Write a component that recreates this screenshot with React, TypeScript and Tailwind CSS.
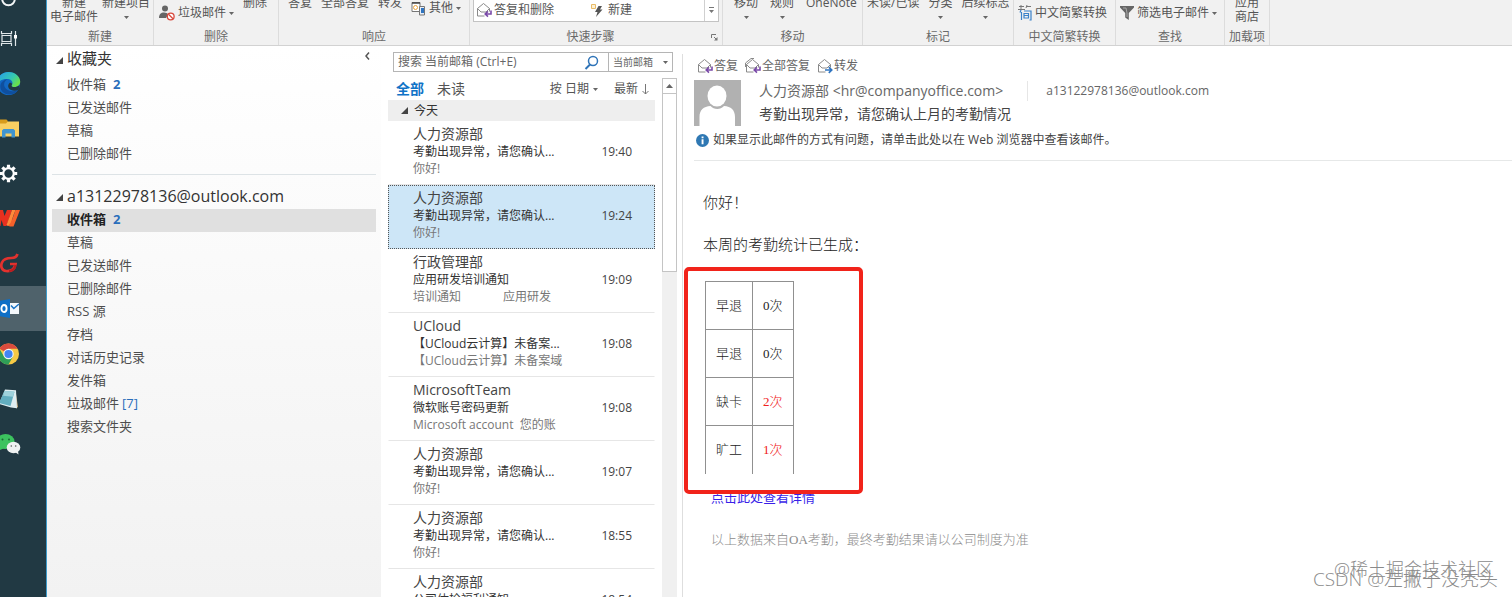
import React from "react";

const LINK_BLUE = "text-[#2a6ebb]";

function Caret({ className = "" }: { className?: string }) {
  return (
    <svg width="5" height="3" viewBox="0 0 5 3" className={`shrink-0 ${className}`} aria-hidden="true">
      <path d="M0 0h5L2.5 3z" fill="#666" />
    </svg>
  );
}

function Corner({ className = "" }: { className?: string }) {
  return (
    <svg width="7" height="7" viewBox="0 0 7 7" className={`shrink-0 ${className}`} aria-hidden="true">
      <path d="M7 0v7H0z" fill="#444" />
    </svg>
  );
}

function Envelope({ arrow, all = false }: { arrow: "reply" | "forward"; all?: boolean }) {
  return (
    <svg width="16" height="16" viewBox="0 0 16 16" fill="none" className="shrink-0" aria-hidden="true">
      <path d="M1.5 6.5 7.5 1.5l6 5v3M1.5 6.5v7.5h7M1.5 6.5l3.5 3.5h5l3.500-3.500" stroke="#8a8a8a" strokeWidth="1" />
      {all && <path d="M.5 9V5L6 .5h3" stroke="#8a8a8a" strokeWidth="1" />}
      {arrow === "reply" ? (
        <path d="M15 8.5v3.5H9.500M12 9.300 9.200 12 12 14.700" stroke="#7a4aa8" strokeWidth="1.600" />
      ) : (
        <path d="M8 12h6.500M11.800 9.200 14.700 12l-2.900 2.800" stroke="#2f74c0" strokeWidth="1.700" />
      )}
    </svg>
  );
}

/* ---------- Windows task bar ---------- */

function TaskIcon({ children }: { children: React.ReactNode }) {
  return (
    <svg width="24" height="26" viewBox="0 0 24 26" fill="none" aria-hidden="true">
      {children}
    </svg>
  );
}

const tasks: { name: string; active?: boolean; icon: React.ReactNode }[] = [
  {
    name: "任务视图",
    icon: (
      <TaskIcon>
        <path d="M1.500 5v2.500h10V5M1.500 20v-2.500h10V20M2 8.500v8M11 8.500v8M1.500 9.500h10M1.500 15.500h10M15.500 5v15" stroke="#dfe6e9" strokeWidth="1.200" />
        <rect x="14" y="9" width="3" height="3.500" fill="#fff" />
      </TaskIcon>
    ),
  },
  {
    name: "Edge",
    icon: (
      <TaskIcon>
        <defs>
          <linearGradient id="edgeTop" x1="0" y1="0" x2="1" y2="0.600">
            <stop offset="0.200" stopColor="#2aa8dc" />
            <stop offset="0.650" stopColor="#35c9b0" />
            <stop offset="1" stopColor="#6adf4a" />
          </linearGradient>
        </defs>
        <circle cx="8.500" cy="12.500" r="11.500" fill="#1268c4" />
        <path d="M-3 10.500C-2 4.500 3 1 8.500 1c7 0 11.700 5 11.700 9.500 0 4-3 5.500-6 5.500-3.200 0-3-1.500-2-2.700 1-2-.5-5-4-5.300C4 7.500 0 8.500-3 13.500z" fill="url(#edgeTop)" />
        <path d="M8.200 8c-3.500 1-5 5-3.500 8 2 4 8 5.500 13.500 3-4 5.500-12 6-16 1.500-4-5-1.500-11.500 6-12.500z" fill="#0f4f9e" />
        <path d="M12.200 13.300c-1 1.200-1.200 2.700 2 2.700 2.200 0 4-.6 5.200-2 .3 2-.4 3.700-1.200 5-3.500 1.500-7.500.5-9.200-1.500-1.500-1.800-1-4 .5-5.500.7-.6 2.500-.2 2.700 1.300z" fill="#213943" />
      </TaskIcon>
    ),
  },
  {
    name: "文件资源管理器",
    icon: (
      <TaskIcon>
        <path d="M-2 4.500h8l1.500 1H19v15H-2z" fill="#f8cf62" />
        <path d="M-2 3.500h8.500L8 5.300 6 7.500h-8z" fill="#d79c1c" />
        <path d="M2 21.500v-7L3.500 13h10l1.500 1.500v7h-3.500v-4h-6v4z" fill="#3f94cf" />
      </TaskIcon>
    ),
  },
  {
    name: "设置",
    icon: (
      <TaskIcon>
        <circle cx="8.500" cy="12.500" r="5.300" stroke="#fff" strokeWidth="2.200" />
        <path d="M8.500 3.800v3M8.500 18.200v3M-.2 12.500h3M14.200 12.500h3M2.350 6.350l2.100 2.100M12.550 16.550l2.100 2.100M2.350 18.650l2.100-2.100M12.550 8.450l2.100-2.100" stroke="#fff" strokeWidth="3.200" />
      </TaskIcon>
    ),
  },
  {
    name: "WPS",
    icon: (
      <TaskIcon>
        <path d="M-2 4h5l1.500 6L7 4h5L6.500 20H3.500L1.500 14 .5 20H-2z" fill="#e8301f" />
        <path d="m13 7-5.500 12.500 2.500 1h3.500L20 4h-4.500l-3.500 10z" fill="#f4612a" />
        <path d="M12 4h3.500l-5 13-2.500 3-1.500-1z" fill="#ff8a3a" />
      </TaskIcon>
    ),
  },
  {
    name: "Foxmail",
    icon: (
      <TaskIcon>
        <path d="M17.500 3c-1 3-3 4-6 4-5 0-8 1-9.500 4.500-1.800 4 0 8 4 8.500 5 .5 8.500-1 9.500-7H10" stroke="#e2322e" strokeWidth="2.700" />
        <path d="M9 20c4 0 6-2 6.500-6" stroke="#b81d20" strokeWidth="2.200" />
      </TaskIcon>
    ),
  },
  {
    name: "Outlook",
    active: true,
    icon: (
      <TaskIcon>
        <path d="M8 7h11v11H8z" fill="#f4f8fb" />
        <path d="m11 9.500 2.800 3L19 8" stroke="#1b74c5" strokeWidth="1.500" />
        <path d="M-2 5 10 3v19l-12-2z" fill="#0f6fc6" />
        <ellipse cx="4" cy="12.500" rx="2.600" ry="3.500" stroke="#fff" strokeWidth="1.900" />
      </TaskIcon>
    ),
  },
  {
    name: "Chrome",
    icon: (
      <TaskIcon>
        <circle cx="8.500" cy="13" r="10.500" fill="#f6c945" />
        <path d="M8.500 13-.6 7.750A10.500 10.500 0 0 1 17.600 7.750L8.500 7.750z" fill="#da4b3d" />
        <path d="M-.6 7.750A10.500 10.500 0 0 0 8.500 23.500L13 15.600 8.500 13 4 15.600z" fill="#2f9e57" />
        <circle cx="8.500" cy="13" r="5.200" fill="#f3f6f7" />
        <circle cx="8.500" cy="13" r="4.100" fill="#4285f4" />
      </TaskIcon>
    ),
  },
  {
    name: "记事本",
    icon: (
      <TaskIcon>
        <path d="m15.500 5 2.500 16-2 1.500z" fill="#c9a97a" />
        <path d="m5 3.500 11 .8 1 18-6-.8-12-3.500z" fill="#dfeef2" />
        <path d="m4.500 5 10 .8-4 14.200-11.500-3z" fill="#62aec0" />
        <path d="m4.500 5 10 .8-1.500 5-10-1z" fill="#9fd2dc" />
      </TaskIcon>
    ),
  },
  {
    name: "微信",
    icon: (
      <TaskIcon>
        <ellipse cx="5.500" cy="10.500" rx="9" ry="7.500" fill="#3cc35f" />
        <path d="m0 15.500-1.500 4 5-2z" fill="#3cc35f" />
        <circle cx="2.500" cy="8.500" r="1" fill="#1d6b36" />
        <circle cx="9" cy="8.500" r="1" fill="#1d6b36" />
        <ellipse cx="13.500" cy="16.500" rx="6.800" ry="5.700" fill="#eef1f1" />
        <path d="m15 21 3.500 2.500-.5-3.500z" fill="#eef1f1" />
        <circle cx="11.300" cy="15" r=".8" fill="#555" />
        <circle cx="15.700" cy="15" r=".8" fill="#555" />
      </TaskIcon>
    ),
  },
];

function TaskBar() {
  return (
    <nav aria-label="任务栏" className="flex w-[47px] shrink-0 flex-col border-r border-[#3d9bcb] bg-[#213943]">
      <button type="button" aria-label="搜索" className="block h-4 shrink-0">
        <svg width="24" height="16" viewBox="0 0 24 16" fill="none" aria-hidden="true" className="block">
          <circle cx="8.500" cy="-1" r="6.300" stroke="#f2f5f6" strokeWidth="2" />
        </svg>
      </button>
      {tasks.map((t) => (
        <button
          key={t.name}
          type="button"
          aria-label={t.name}
          className={`flex h-[45px] shrink-0 items-center ${t.active ? "bg-[#4f626b]" : ""}`}
        >
          {t.icon}
        </button>
      ))}
    </nav>
  );
}

/* ---------- Ribbon ---------- */

function RibbonGroup({ label, width, children, extra }: { label: string; width: string; children: React.ReactNode; extra?: React.ReactNode }) {
  return (
    <section className={`flex shrink-0 flex-col justify-between border-r border-[#dcdcdc] ${width}`}>
      <div className="flex h-6 items-end whitespace-nowrap">{children}</div>
      <div className="flex h-4 items-center text-[#6a6a6a]">
        <h2 className="flex-1 text-center">{label}</h2>
        {extra}
      </div>
    </section>
  );
}

function BigButton({ top, bottom, caret = false }: { top: string; bottom?: string; caret?: boolean }) {
  return (
    <button type="button" className="flex shrink-0 flex-col items-center leading-[14px]">
      <span>{top}</span>
      <span className="flex h-[14px] items-center">{bottom ?? (caret ? <Caret /> : null)}</span>
    </button>
  );
}

function SmallButton({ icon, label, caret = false }: { icon: React.ReactNode; label: string; caret?: boolean }) {
  return (
    <button type="button" className="flex h-[22px] shrink-0 items-center gap-[3px]">
      {icon}
      <span>{label}</span>
      {caret && <Caret />}
    </button>
  );
}

function Ribbon() {
  return (
    <header className="flex h-[46px] shrink-0 overflow-hidden border-b border-[#d2d2d2] bg-[#f1f1f1] text-[12px] leading-[16px] text-[#555]">
      <RibbonGroup label="新建" width="w-[107px]">
        <div className="flex gap-1 pl-[3px]">
          <BigButton top="新建" bottom="电子邮件" />
          <BigButton top="新建项目" caret />
        </div>
      </RibbonGroup>
      <RibbonGroup label="删除" width="w-[125px]">
        <div className="flex items-end gap-[9px] pl-[5px]">
          <SmallButton
            label="垃圾邮件"
            caret
            icon={
              <svg width="16" height="16" viewBox="0 0 16 16" fill="none" aria-hidden="true">
                <circle cx="6" cy="3.500" r="3" fill="#666" />
                <path d="M0 13c0-4 2-5.500 5-5.500 2 0 3.500.7 4.300 2L7 13z" fill="#666" />
                <circle cx="11.700" cy="11.500" r="3.400" fill="#fff" stroke="#d9483b" strokeWidth="1.300" />
                <path d="m9.500 9.300 4.500 4.500" stroke="#d9483b" strokeWidth="1.300" />
              </svg>
            }
          />
          <BigButton top="删除" />
        </div>
      </RibbonGroup>
      <RibbonGroup label="响应" width="w-[191px]">
        <div className="flex items-end gap-[9px] pl-[9px]">
          <BigButton top="答复" />
          <BigButton top="全部答复" />
          <BigButton top="转发" />
          <div className="flex h-[27px] items-start">
            <SmallButton
              label="其他"
              caret
              icon={
                <svg width="15" height="15" viewBox="0 0 15 15" fill="none" aria-hidden="true">
                  <path d="M1 1.500h8v9H1z" fill="#fff" stroke="#777" />
                  <path d="M1 2h8" stroke="#444" strokeWidth="1.500" />
                  <circle cx="4.500" cy="6.500" r="2" stroke="#e8a33d" />
                  <path d="M8.500 5.500h5v8.500h-5z" fill="#e8eef5" stroke="#777" />
                  <path d="M10 7h3v5h-3z" fill="#2f74c0" />
                </svg>
              }
            />
          </div>
        </div>
      </RibbonGroup>
      <RibbonGroup
        label="快速步骤"
        width="w-[253px]"
        extra={
          <button type="button" aria-label="管理快速步骤" className="mr-1">
            <svg width="7" height="7" viewBox="0 0 7 7" fill="none" aria-hidden="true">
              <path d="M.5 4V.5H5M3 3l2.500 2.500" stroke="#777" />
              <path d="M6.500 3v3.500H3z" fill="#777" />
            </svg>
          </button>
        }
      >
        <div className="mx-[3px] mb-[2px] flex h-7 flex-1 items-stretch border border-[#c3c3c3] bg-white">
          <button type="button" className="flex w-[117px] items-center gap-[2px] pl-[2px] pt-1">
            <Envelope arrow="reply" />
            <span>答复和删除</span>
          </button>
          <button type="button" className="flex flex-1 items-center gap-[5px] pt-1">
            <svg width="12" height="14" viewBox="0 0 12 14" fill="none" aria-hidden="true">
              <path d="M.5 1.500h4v4h-4z" fill="#fdf1d6" stroke="#e9bb66" />
              <path d="M7.500 3h3.500L9 6.500h2.500L5 14l1.500-5H4z" fill="#555" />
            </svg>
            <span>新建</span>
          </button>
          <button type="button" aria-label="更多快速步骤" className="flex w-[14px] items-end justify-center border-l border-[#d0d0d0] pb-2">
            <svg width="5" height="6" viewBox="0 0 5 6" aria-hidden="true">
              <path d="M0 0h5v1H0zM0 3h5L2.500 6z" fill="#777" />
            </svg>
          </button>
        </div>
      </RibbonGroup>
      <RibbonGroup label="移动" width="w-[140px]">
        <div className="flex gap-3 pl-[11px]">
          <BigButton top="移动" caret />
          <BigButton top="规则" caret />
          <BigButton top="OneNote" />
        </div>
      </RibbonGroup>
      <RibbonGroup label="标记" width="w-[151px]">
        <div className="flex gap-[9px] pl-1">
          <BigButton top="未读/已读" />
          <BigButton top="分类" caret />
          <BigButton top="后续标志" caret />
        </div>
      </RibbonGroup>
      <RibbonGroup label="中文简繁转换" width="w-[102px]">
        <div className="pl-1">
          <SmallButton
            label="中文简繁转换"
            icon={
              <svg width="14" height="16" viewBox="0 0 14 16" fill="none" aria-hidden="true">
                <path d="M1 1.500h5M3 0v5M0 4.500h7M8 1.500h5M9 0 8 3" stroke="#777" />
                <path d="M3 5 2 7.500M3.500 7v8M6 6h7v9h-1.500M6 8.500h4.500v4.500H6zM6 10.500h4" stroke="#3b82c9" strokeWidth="1.200" />
              </svg>
            }
          />
        </div>
      </RibbonGroup>
      <RibbonGroup label="查找" width="w-[109px]">
        <div className="pl-1">
          <SmallButton
            label="筛选电子邮件"
            caret
            icon={
              <svg width="14" height="14" viewBox="0 0 14 14" aria-hidden="true">
                <path d="M0 0h14v1.500L8.800 7v7L5.200 11.500V7L0 1.500z" fill="#666" />
                <path d="M3 2h3l1 5v4" fill="none" stroke="#a9a9a9" />
              </svg>
            }
          />
        </div>
      </RibbonGroup>
      <RibbonGroup label="加载项" width="w-[45px]">
        <div className="flex flex-1 justify-center">
          <BigButton top="应用" bottom="商店" />
        </div>
      </RibbonGroup>
    </header>
  );
}

/* ---------- Folder pane ---------- */

type Folder = { name: string; count?: string; bracket?: boolean; selected?: boolean };

const favourites: Folder[] = [{ name: "收件箱", count: "2" }, { name: "已发送邮件" }, { name: "草稿" }, { name: "已删除邮件" }];

const folders: Folder[] = [
  { name: "收件箱", count: "2", selected: true },
  { name: "草稿" },
  { name: "已发送邮件" },
  { name: "已删除邮件" },
  { name: "RSS 源" },
  { name: "存档" },
  { name: "对话历史记录" },
  { name: "发件箱" },
  { name: "垃圾邮件", count: "[7]", bracket: true },
  { name: "搜索文件夹" },
];

function FolderList({ items }: { items: Folder[] }) {
  return (
    <ul>
      {items.map((f) => (
        <li key={f.name}>
          <a
            href="#folder"
            className={`flex h-[23px] items-center pb-1 pl-[15px] text-[13px] leading-5 ${f.selected ? "bg-[#e0e0e0] font-bold text-[#222]" : "text-[#4d4d4d]"}`}
          >
            {f.name}
            {f.count && <span className={`${LINK_BLUE} ${f.bracket ? "ml-[3px]" : "ml-[7px] font-bold"}`}>{f.count}</span>}
          </a>
        </li>
      ))}
    </ul>
  );
}

function FolderPane() {
  return (
    <aside className="flex w-[334px] shrink-0 flex-col bg-linear-to-b from-white to-[#f2f2f2] pl-[5px] pr-[5px]">
      <div className="flex h-7 shrink-0 items-center pb-1 pl-1 text-[#333]">
        <Corner className="mt-1" />
        <h2 className="ml-1 flex-1 text-[15px] leading-6">收藏夹</h2>
        <button type="button" aria-label="最小化文件夹窗格" className="mb-[5px] mr-[6px]">
          <svg width="5" height="8" viewBox="0 0 5 8" fill="none" aria-hidden="true">
            <path d="M4 .5 1 4l3 3.500" stroke="#555" strokeWidth="1.500" />
          </svg>
        </button>
      </div>
      <FolderList items={favourites} />
      <hr className="mb-[7px] mt-2 border-[#dde3e6]" />
      <div className="flex h-[27px] shrink-0 items-center pl-1 text-[#333]">
        <Corner className="mt-1" />
        <h2 className="ml-1 text-[16px] leading-6">a13122978136@outlook.com</h2>
      </div>
      <FolderList items={folders} />
    </aside>
  );
}

/* ---------- Message list ---------- */

const messages = [
  { from: "人力资源部", subject: "考勤出现异常，请您确认...", preview: "你好!", time: "19:40" },
  { from: "人力资源部", subject: "考勤出现异常，请您确认...", preview: "你好!", time: "19:24", selected: true },
  { from: "行政管理部", subject: "应用研发培训通知", preview: "培训通知", preview2: "应用研发", time: "19:09" },
  { from: "UCloud", subject: "【UCloud云计算】未备案...", preview: "【UCloud云计算】未备案域", time: "19:08" },
  { from: "MicrosoftTeam", subject: "微软账号密码更新", preview: "Microsoft account  您的账", time: "19:08" },
  { from: "人力资源部", subject: "考勤出现异常，请您确认...", preview: "你好!", time: "19:07" },
  { from: "人力资源部", subject: "考勤出现异常，请您确认...", preview: "你好!", time: "18:55" },
  { from: "人力资源部", subject: "公司体检福利通知", preview: "", time: "18:54" },
];

function MessageList() {
  return (
    <section aria-label="邮件列表" className="flex w-[301px] shrink-0 flex-col overflow-hidden bg-white pl-[7px] pt-[6px] text-[12px]">
      <form className="ml-[5px] mr-[9px] flex h-5 shrink-0 border border-[#b5b5b5]">
        <input aria-label="搜索" placeholder="搜索 当前邮箱 (Ctrl+E)" className="min-w-0 flex-1 pl-1 text-[#444] outline-none placeholder:text-[#666]" />
        <button type="button" aria-label="开始搜索" className="flex w-[34px] items-center justify-center">
          <svg width="15" height="15" viewBox="0 0 15 15" fill="none" aria-hidden="true">
            <circle cx="9" cy="6" r="4.500" stroke="#2f74b8" strokeWidth="1.500" />
            <path d="M6 9.500 1.500 14" stroke="#2f74b8" strokeWidth="2" />
          </svg>
        </button>
        <div className="relative flex w-16 items-center border-l border-[#b5b5b5]">
          <select aria-label="搜索范围" className="w-full appearance-none pl-1 text-[10px] text-[#666] outline-none">
            <option>当前邮箱</option>
          </select>
          <Caret className="pointer-events-none absolute right-1" />
        </div>
      </form>
      <div className="mt-[6px] flex min-h-0 flex-1 gap-[7px]">
        <div className="w-[267px] shrink-0">
          <div className="flex h-[22px] items-center pl-2 text-[#555]">
            <button type="button" className="text-[14px] font-bold leading-5 text-[#1173c7]">全部</button>
            <button type="button" className="ml-[13px] text-[14px] leading-5">未读</button>
            <button type="button" className="ml-auto flex items-center gap-1">按 日期<Caret /></button>
            <button type="button" className="ml-4 mr-[6px] flex items-center gap-1">
              最新
              <svg width="7" height="11" viewBox="0 0 7 11" fill="none" aria-hidden="true">
                <path d="M3.500 0v10M.5 7l3 3 3-3" stroke="#777" />
              </svg>
            </button>
          </div>
          <h3 className="flex h-[21px] items-center bg-[#eeeeee] pl-[13px] text-[#333]">
            <Corner className="mr-[6px]" />
            今天
          </h3>
          <ul>
            {messages.map((m, i) => (
              <li key={i}>
                <button
                  type="button"
                  className={`grid h-16 w-full grid-cols-[minmax(0,1fr)_auto] content-start whitespace-pre border pl-6 pr-[22px] pt-[3px] text-left leading-[17px] ${
                    m.selected ? "border-dotted border-[#555] bg-[#cde6f7]" : "border-transparent border-b-[#e6e6e6]"
                  }`}
                >
                  <span className="col-span-2 text-[14px] leading-[18px] text-[#444]">{m.from}</span>
                  <span className="text-[#333]">{m.subject}</span>
                  <span className="text-[#444]">{m.time}</span>
                  <span className="col-span-2 flex text-[#777]">
                    <span>{m.preview}</span>
                    {m.preview2 && <span className="ml-[42px]">{m.preview2}</span>}
                  </span>
                </button>
              </li>
            ))}
          </ul>
        </div>
        <div className="w-[15px] shrink-0 bg-[#f0f0f0]" aria-hidden="true">
          <div className="flex h-4 items-center justify-center border border-[#c4c4c4] bg-white">
            <svg width="7" height="4" viewBox="0 0 7 4">
              <path d="M0 4h7L3.500 0z" fill="#666" />
            </svg>
          </div>
          <div className="h-[178px] border border-t-0 border-[#c4c4c4] bg-white" />
        </div>
      </div>
    </section>
  );
}

/* ---------- Reading pane ---------- */

const attendance = [
  { kind: "早退", count: "0次" },
  { kind: "早退", count: "0次" },
  { kind: "缺卡", count: "2次", alert: true },
  { kind: "旷工", count: "1次", alert: true },
];

function ReadingPane() {
  return (
    <main className="mt-2 min-w-0 flex-1 border-l border-[#dedede] bg-white pl-[11px]">
      <div className="flex h-[26px] items-center gap-[7px] pb-[2px] pl-[3px] text-[12px] leading-4 text-[#666]">
        <button type="button" className="flex items-center gap-px"><Envelope arrow="reply" />答复</button>
        <button type="button" className="flex items-center gap-px"><Envelope arrow="reply" all />全部答复</button>
        <button type="button" className="flex items-center gap-px"><Envelope arrow="forward" />转发</button>
      </div>
      <div className="flex">
        <svg width="47" height="46" viewBox="0 0 47 46" className="shrink-0" aria-hidden="true">
          <path d="M0 0h47v46H0z" fill="#b1b1b1" />
          <ellipse cx="23" cy="16" rx="9.500" ry="10.500" fill="#fff" />
          <path d="M5.500 46V37c0-7 4-10.500 11-11 3.500 4 10 4 13.500 0 7 .5 11 4 11 11v9z" fill="#fff" />
        </svg>
        <div className="ml-[18px] text-[14px]">
          <div className="flex h-[22px] items-center">
            <p className="leading-5 text-[#666]">人力资源部 &lt;hr@companyoffice.com&gt;</p>
            <p className="ml-6 border-l border-[#e6e6e6] pl-[18px] text-[12px] leading-5 text-[#666]">a13122978136@outlook.com</p>
          </div>
          <h1 className="mt-px leading-[22px] text-[#444]">考勤出现异常，请您确认上月的考勤情况</h1>
        </div>
      </div>
      <button type="button" className="mt-1 flex h-5 items-center gap-1 pl-[2px] text-[12px] text-[#444]">
        <svg width="13" height="13" viewBox="0 0 13 13" aria-hidden="true">
          <circle cx="6.500" cy="6.500" r="6.500" fill="#2f78b3" />
          <path d="M5.600 5.300h1.900v5H5.600zM5.600 2.500h1.900v1.700H5.600z" fill="#fff" />
        </svg>
        <span>如果显示此邮件的方式有问题，请单击此处以在 Web 浏览器中查看该邮件。</span>
      </button>
      <hr className="mt-[10px] border-[#e6e8e8]" />
      <article className="pl-[9px] pt-8 font-['Liberation_Serif','Noto_Sans_CJK_SC',serif] text-[13px] font-light leading-5 text-[#222]">
        <p className="text-[15px]">你好！</p>
        <p className="mt-[22px] text-[15px]">本周的考勤统计已生成：</p>
        <div className="relative mt-[26px] pl-[2px]">
          <table className="border-collapse">
            <tbody>
              {attendance.map((a, i) => (
                <tr key={i} className="border-t border-[#909090]">
                  <td className="h-12 border-x border-[#909090] px-[10px]">{a.kind}</td>
                  <td className={`h-12 border-x border-[#909090] px-[10px] ${a.alert ? "text-[#f02020]" : ""}`}>{a.count}</td>
                </tr>
              ))}
            </tbody>
          </table>
          <div className="pointer-events-none absolute -left-[19px] -top-[14px] h-[227px] w-[179px] rounded-[5px] border-4 border-[#f1231a]" />
        </div>
        <p className="mt-[14px] pl-2">
          <a href="#details" className="font-normal text-[#3a1fe8]">点击此处查看详情</a>
        </p>
        <p className="mt-[22px] pl-2 text-[#8c8c8c]">以上数据来自OA考勤，最终考勤结果请以公司制度为准</p>
      </article>
    </main>
  );
}

export default function App() {
  return (
    <div className="relative flex h-screen overflow-hidden bg-white font-['Open_Sans','Noto_Sans_CJK_SC',sans-serif]">
      <TaskBar />
      <div className="flex min-w-0 flex-1 flex-col">
        <Ribbon />
        <div className="flex min-h-0 flex-1">
          <FolderPane />
          <MessageList />
          <ReadingPane />
        </div>
      </div>
      <p className="pointer-events-none absolute bottom-4 right-[18px] text-[18px] font-light leading-6 text-[#8a8a8a]">@稀土掘金技术社区</p>
      <p className="pointer-events-none absolute bottom-[6px] right-[14px] text-[19px] font-light leading-6 text-[#8a8a8a]">CSDN @左撇子没秃头</p>
    </div>
  );
}
